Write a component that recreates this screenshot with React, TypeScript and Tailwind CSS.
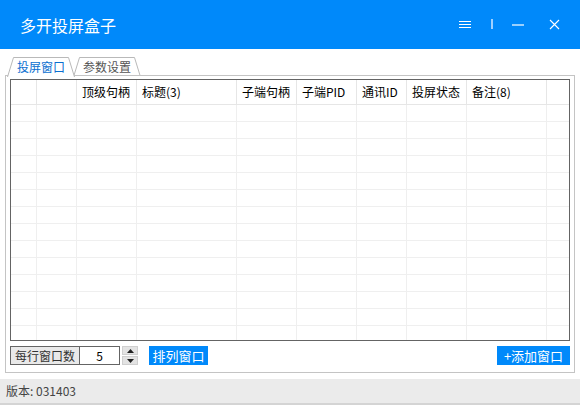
import React from 'react';

const cols = ['', '', '顶级句柄', '标题(3)', '子端句柄', '子端PID', '通讯ID', '投屏状态', '备注(8)', ''];

function Tab({ label, active, width, left }: { label: string; active?: boolean; width: number; left: number }) {
  return (
    <div className={`relative h-[20px] shrink-0 ${active ? 'z-20' : 'z-0'}`} style={{ width, marginLeft: left }}>
      <svg className="absolute inset-0" width={width} height={21} viewBox={`0 0 ${width} 21`}>
        <path
          d={`M0.5 21 L6.5 1.5 L${width - 6.5} 1.5 L${width - 0.5} 21`}
          fill="white"
          stroke="#b9b9b9"
          strokeWidth="1"
        />
      </svg>
      <span
        className={`relative flex h-full items-center justify-center pt-[2px] text-[12px] ${
          active ? 'text-[#0a6fd0]' : 'text-[#555]'
        }`}
      >
        {label}
      </span>
    </div>
  );
}

export default function App() {
  const rows = Array.from({ length: 14 });

  return (
    <div
      className="w-[580px] h-[408px] bg-white flex flex-col overflow-hidden select-none"
      style={{ fontFamily: '"Noto Sans CJK SC", "Noto Sans", sans-serif' }}
    >
      {/* Title bar */}
      <header className="h-[49px] shrink-0 bg-[#0089fa] flex items-center pl-5 text-white">
        <span className="text-[16px] leading-none">多开投屏盒子</span>
        <div className="ml-auto flex items-center h-full">
          <svg width="14" height="10" viewBox="0 0 14 10" className="mr-[19px]">
            <path d="M1 1.5 H13 M1 4.5 H13 M1 7.5 H13" stroke="white" strokeWidth="1.2" />
          </svg>
          <div className="w-[2px] h-[10px] bg-[#9fd0ff] mr-[19px] mt-[-1px]" />
          <svg width="12" height="4" viewBox="0 0 12 4" className="mr-[25px]">
            <path d="M0 2 H12" stroke="white" strokeWidth="1.2" />
          </svg>
          <svg width="11" height="11" viewBox="0 0 11 11" className="mr-[20px]">
            <path d="M1 1 L10 10 M10 1 L1 10" stroke="white" strokeWidth="1.1" />
          </svg>
        </div>
      </header>

      {/* Tabs */}
      <div className="flex items-end pt-[7px] pl-[7px] relative">
        <Tab label="投屏窗口" active width={68} left={0} />
        <Tab label="参数设置" width={68} left={-2} />
      </div>

      {/* Panel */}
      <div className="relative z-10 ml-[5px] w-[570px] h-[298px] border border-[#c4c4c4] bg-white flex flex-col pl-[4px] pr-[4px] pt-[3px] pb-[7px] -mt-px">
        <div className="h-[262px] border border-[#646464] overflow-hidden">
          <div className="grid grid-cols-[26px_40px_60px_100px_60px_60px_50px_60px_80px_1fr] h-[25px] border-b border-[#e6e6e6]">
            {cols.map((c, i) => (
              <div
                key={i}
                className="border-r border-[#e6e6e6] last:border-r-0 flex items-center pl-[5px] text-[12px] text-black whitespace-nowrap overflow-hidden"
              >
                {c}
              </div>
            ))}
          </div>
          {rows.map((_, r) => (
            <div
              key={r}
              className="grid grid-cols-[26px_40px_60px_100px_60px_60px_50px_60px_80px_1fr] h-[17px] border-b border-[#efefef]"
            >
              {cols.map((_, i) => (
                <div key={i} className="border-r border-[#efefef] last:border-r-0" />
              ))}
            </div>
          ))}
        </div>

        {/* Controls */}
        <div className="mt-[5px] h-[19px] flex items-stretch text-[12px]">
          <div className="w-[70px] border border-[#646464] bg-[#e9e9e9] text-[#333] flex items-center justify-center">
            每行窗口数
          </div>
          <div className="w-[41px] -ml-px border border-[#646464] bg-white flex items-center justify-center text-black">
            5
          </div>
          <div className="ml-[2px] w-[16px] flex flex-col gap-px">
            <div className="flex-1 bg-[#e3e3e3] border border-[#cfcfcf] flex items-center justify-center">
              <svg width="7" height="4" viewBox="0 0 7 4">
                <path d="M0 4 L3.5 0 L7 4 Z" fill="#222" />
              </svg>
            </div>
            <div className="flex-1 bg-[#e3e3e3] border border-[#cfcfcf] flex items-center justify-center">
              <svg width="7" height="4" viewBox="0 0 7 4">
                <path d="M0 0 L3.5 4 L7 0 Z" fill="#222" />
              </svg>
            </div>
          </div>
          <button className="ml-[11px] w-[59px] bg-[#0089fa] text-white text-[13px] flex items-center justify-center">
            排列窗口
          </button>
          <button className="ml-auto w-[73px] bg-[#0089fa] text-white text-[13px] flex items-center justify-center">
            +添加窗口
          </button>
        </div>
      </div>

      {/* Status bar */}
      <footer className="mt-[6px] h-[26px] shrink-0 bg-[#ebebeb] border-b-2 border-[#d4d4d4] flex items-center pl-[6px] text-[12px] text-[#444]">
        版本: 031403
      </footer>
    </div>
  );
}
